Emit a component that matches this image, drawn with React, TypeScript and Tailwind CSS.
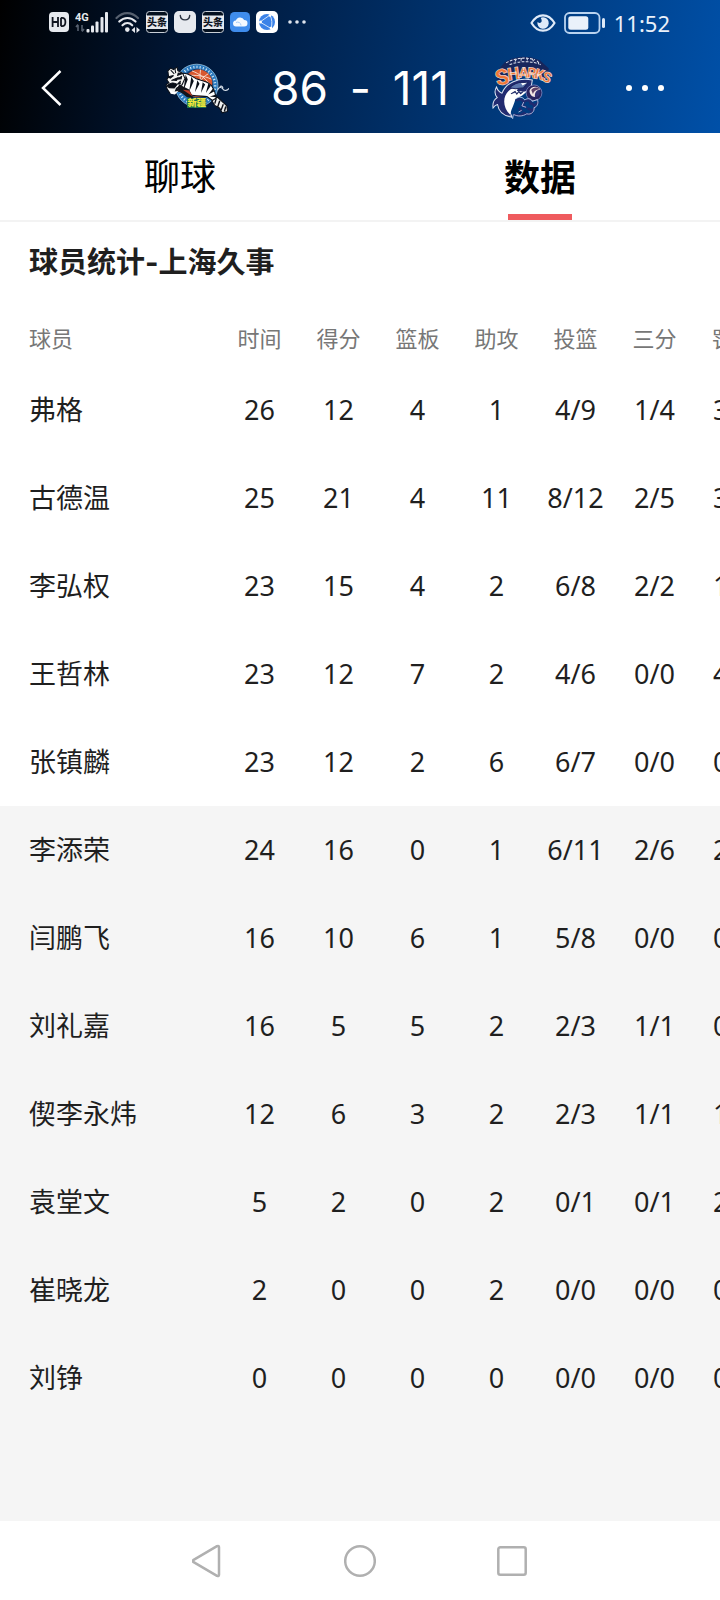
type Player = { name: string; stats: string[] };

const columns = ["时间", "得分", "篮板", "助攻", "投篮", "三分", "罚球"];

const starters: Player[] = [
  { name: "弗格", stats: ["26", "12", "4", "1", "4/9", "1/4", "3/3"] },
  { name: "古德温", stats: ["25", "21", "4", "11", "8/12", "2/5", "3/3"] },
  { name: "李弘权", stats: ["23", "15", "4", "2", "6/8", "2/2", "1/1"] },
  { name: "王哲林", stats: ["23", "12", "7", "2", "4/6", "0/0", "4/4"] },
  { name: "张镇麟", stats: ["23", "12", "2", "6", "6/7", "0/0", "0/0"] },
];

const bench: Player[] = [
  { name: "李添荣", stats: ["24", "16", "0", "1", "6/11", "2/6", "2/2"] },
  { name: "闫鹏飞", stats: ["16", "10", "6", "1", "5/8", "0/0", "0/0"] },
  { name: "刘礼嘉", stats: ["16", "5", "5", "2", "2/3", "1/1", "0/0"] },
  { name: "偰李永炜", stats: ["12", "6", "3", "2", "2/3", "1/1", "1/1"] },
  { name: "袁堂文", stats: ["5", "2", "0", "2", "0/1", "0/1", "2/2"] },
  { name: "崔晓龙", stats: ["2", "0", "0", "2", "0/0", "0/0", "0/0"] },
  { name: "刘铮", stats: ["0", "0", "0", "0", "0/0", "0/0", "0/0"] },
];

function HdIcon() {
  return (
    <svg width="20" height="20" viewBox="0 0 20 20" aria-hidden="true">
      <rect width="20" height="20" rx="4" fill="#e6e9ee" />
      <path d="M3.6 5v10M9 5v10M3.6 10H9M12 5.8v8.4M12 5.8h1.2c2.2 0 3.2 1.6 3.2 4.2s-1 4.2-3.2 4.2H12" fill="none" stroke="#10151f" strokeWidth="1.8" />
    </svg>
  );
}

function SignalIcon() {
  return (
    <svg width="34" height="22" viewBox="0 0 34 22" aria-hidden="true">
      <text x="0" y="10" fontSize="11" fontWeight="700" fill="#e6e9ee" className="font-['Roboto',sans-serif]">4G</text>
      <path d="M3 20v-6M1 16l2-2.5M7 14v6M9 18l-2 2.5" stroke="#56606f" strokeWidth="1.6" fill="none" />
      <g fill="#e6e9ee">
        <rect x="11.500" y="18" width="3" height="3.500" rx="1" />
        <rect x="16" y="14.500" width="3" height="7" rx="1" />
        <rect x="20.500" y="10.500" width="3" height="11" rx="1" />
        <rect x="25.500" y="6" width="3" height="15.500" rx="1" />
        <rect x="30" y="1" width="3" height="20.500" rx="1" />
      </g>
    </svg>
  );
}

function WifiIcon() {
  return (
    <svg width="25" height="22" viewBox="0 0 25 22" aria-hidden="true">
      <g fill="none" strokeWidth="2.2" strokeLinecap="round">
        <path d="M1.500 7C8 .5 16.500.5 23 7" stroke="#56606f" />
        <path d="M4.300 10.500c5-4.700 11.400-4.700 16.200 0" stroke="#e6e9ee" />
        <path d="M7.500 14.300c3-2.800 6.900-2.800 9.700 0" stroke="#e6e9ee" />
      </g>
      <circle cx="12.300" cy="18.600" r="2.300" fill="#e6e9ee" />
      <path d="M20 16v6l-3.500-3zM21.500 16v6l3.500-3z" fill="#e6e9ee" />
    </svg>
  );
}

function ToutiaoIcon() {
  return (
    <svg width="22" height="22" viewBox="0 0 22 22" aria-hidden="true">
      <rect x=".5" y=".5" width="21" height="21" rx="3" fill="#04101f" stroke="#c8ced6" />
      <rect x="0" y="4.500" width="22" height="13.500" fill="#e6e9ee" />
      <text x="11" y="15" fontSize="10" fontWeight="900" textAnchor="middle" fill="#10151f" className="font-['Noto_Sans_CJK_SC',sans-serif]">头条</text>
    </svg>
  );
}

function BagIcon() {
  return (
    <svg width="22" height="22" viewBox="0 0 22 22" aria-hidden="true">
      <rect width="22" height="22" rx="5" fill="#e6e9ee" />
      <path d="M6.300 4.500c.3 5.800 9.100 5.800 9.400 0" fill="none" stroke="#2b3340" strokeWidth="1.4" strokeLinecap="round" />
    </svg>
  );
}

function CloudIcon() {
  return (
    <svg width="20" height="20" viewBox="0 0 20 20" aria-hidden="true">
      <rect width="20" height="20" rx="4.500" fill="#3f8cec" />
      <path d="M6.300 14.600a3 3 0 0 1-.5-6 4.500 4.500 0 0 1 8.400-.6 3.300 3.300 0 0 1 0 6.600z" fill="#f4f9ff" />
      <path d="M6 10.500a3.400 3.400 0 0 1 5 3" stroke="#a9cdf8" fill="none" />
    </svg>
  );
}

function GlobeIcon() {
  return (
    <svg width="22" height="22" viewBox="0 0 22 22" aria-hidden="true">
      <rect width="22" height="22" rx="5" fill="#fff" />
      <circle cx="11" cy="11" r="8" fill="#3b82e8" />
      <path d="M4 11l10-7M4 11l11 6.500M14 4c2 4 2.500 9 1 13.500" fill="none" stroke="#cfe3fb" />
      <circle cx="4.500" cy="11" r="1.500" fill="#fff" />
      <circle cx="14" cy="4.500" r="1.300" fill="#fff" />
      <circle cx="15" cy="17" r="1.300" fill="#fff" />
    </svg>
  );
}

function EyeIcon() {
  return (
    <svg width="26" height="20" viewBox="0 0 26 20" aria-hidden="true">
      <path d="M1.500 10C4.500 5 8.500 2.300 13 2.300S21.500 5 24.500 10C21.500 15 17.500 17.700 13 17.700S4.500 15 1.500 10z" fill="none" stroke="#dfeaf8" strokeWidth="2.200" strokeLinejoin="round" />
      <path d="M13 4.300a5.700 5.700 0 1 1-5.500 4.400c.6 1.500 3.600 1.700 4.100-.2.400-1.500-.6-2.900-.9-3.700.7-.3 1.500-.5 2.300-.5z" fill="#dfeaf8" />
    </svg>
  );
}

function BatteryIcon() {
  return (
    <svg width="42" height="22" viewBox="0 0 42 22" aria-hidden="true">
      <rect x="1" y="1" width="34.500" height="20" rx="4.500" fill="none" stroke="#b9d3f0" strokeWidth="1.800" />
      <rect x="4.300" y="4.300" width="20" height="13.400" rx="2.500" fill="#eaf1fa" />
      <rect x="38" y="6" width="3" height="10" rx="1.500" fill="#dfeaf8" />
    </svg>
  );
}

function TigerLogo() {
  return (
    <svg width="64" height="54" viewBox="46 56 180 152" role="img" aria-label="新疆队">
      <circle cx="135" cy="125" r="60" fill="#2b79bd" stroke="#a8d4ee" strokeWidth="2" />
      <circle cx="135" cy="125" r="52" fill="none" stroke="#cfe6f5" strokeWidth="7" strokeDasharray="3 6" />
      <circle cx="137" cy="122" r="44" fill="#123d70" />
      <circle cx="140" cy="119" r="39" fill="#d9572f" />
      <path d="M122 84c22 8 42 24 54 44M108 97c22-2 48 0 68 10M146 80c-2 16-2 26 2 36M168 92c-12 6-20 14-24 26" fill="none" stroke="#fbe3d5" strokeWidth="2.500" />
      <path d="M86 92c18-6 32 4 48 14 18 8 38 6 48 28 8 14 4 22 10 28l-8 8-20-14c-22-2-44-2-60-8l-26-10z" fill="#fff" stroke="#0a0f18" strokeWidth="3" />
      <path d="M104 94l-6 44 12-30zM120 100l-6 42 13-30zM137 110l-7 34 13-24zM152 116l-5 30 12-24zM168 119l-7 27 14-20zM182 132l-14 18 16-8zM190 150l-18 6 18 2z" fill="#0a0f18" />
      <path d="M54 84l8-8 8 4 10-7 2 10 14 8 6 14-8 18-16 10-4 12-14 2-8-12-3-12 8-6-6-8 5-8z" fill="#f5f5f2" stroke="#0a0f18" strokeWidth="3" />
      <path d="M62 82l10 10M74 78l2 12M52 101l18-4-10 8M64 111l18-8-4 9M82 90l12 2-14 5M94 99l-14 8 13-1M52 126c8-10 20-10 28-4l-8 10-14-1zM90 112l-8 8 8 1" fill="#0a0f18" stroke="#0a0f18" strokeWidth="3" />
      <path d="M86 122l28 14 12 24-18-2-20-16-14 3z" fill="#12151c" />
      <path d="M96 137l18 2 10 17z" fill="#bd3b25" />
      <path d="M58 135l10 8 16-3-10 10-12-2z" fill="#fff" />
      <path d="M194 138c2-8 10-10 14-4 4 7 14 6 18-1M200 128c6-4 10 2 8 6" fill="none" stroke="#d8e1ea" strokeWidth="3" />
      <path d="M178 168l16-10 26 24 2 16-15 4-7-13-14-8z" fill="#eef0f0" stroke="#0a0f18" strokeWidth="3" />
      <path d="M190 162l-4 14M200 168l-6 18M210 178l-6 16M217 184l-4 14" stroke="#0a0f18" strokeWidth="4" />
      <rect x="108" y="161" width="54" height="27" fill="#23784e" />
      <text x="135" y="184" fontSize="26" fontWeight="900" textAnchor="middle" fill="#f1e93b" className="font-['Noto_Sans_CJK_SC',sans-serif]">新疆</text>
    </svg>
  );
}

function SharkLogo() {
  return (
    <svg width="64" height="64" viewBox="52 40 182 186" role="img" aria-label="上海队">
      <path d="M90 58q48-28 102-6l26 24-6 30-54-14-66 12-22 24-6-40z" fill="#17265c" />
      <path d="M94 60q40-22 84-9M104 65q42-16 86-2M124 49l-6 10M138 46l-1 12M154 45l3 12M170 48l6 12M184 54l10 12" fill="none" stroke="#dfe6f2" strokeWidth="3" strokeDasharray="8 4" />
      <g fontWeight="900" fill="#ef7537" stroke="#f5ede8" strokeWidth="1.500" className="font-['Roboto',sans-serif]">
        <text fontSize="64" transform="translate(68 128) rotate(-14)">S</text>
        <text fontSize="50" transform="translate(100 111) rotate(-8)">H</text>
        <text fontSize="44" transform="translate(129 103) rotate(2)">A</text>
        <text fontSize="42" transform="translate(153 102) rotate(8)">R</text>
        <text fontSize="42" transform="translate(174 105) rotate(14)">K</text>
        <text fontSize="42" transform="translate(195 111) rotate(20)">S</text>
      </g>
      <path d="M170 110c-42-8-76 8-88 38-8-3-14-12-16-18-6 10-5 22 2 31-10 6-14 16-12 30 4-6 8-9 13-10 4 26 22 34 42 36-7-12-8-26-2-36l14-22c18-8 36-16 44-30z" fill="#222b70" stroke="#dce3f2" strokeWidth="3" />
      <path d="M101 142c-17 16-18 46 4 68 6-20 14-34 16-46 14-4 26-12 30-20l-26-2 6-14c-11 2-23 6-30 14z" fill="#fff" />
      <path d="M104 132c14-13 34-18 53-14l-12 14-24 3zM108 150l12-7 5 8 6-8 5 7 8-7" fill="#5c76ad" stroke="#1d2560" strokeWidth="3" />
      <path d="M137 119l18-1-13 8z" fill="#fff" />
      <circle cx="175" cy="147" r="23" fill="#28235e" stroke="#8f9bd0" strokeWidth="2" />
      <circle cx="178" cy="146" r="14" fill="#343074" />
      <path d="M162 141c3-13 23-16 32-3-12-1-18 9-16 21-9 0-16-7-16-18z" fill="#f2e6e4" />
      <path d="M167 139c5-8 18-10 25-2-12 0-18 5-20 14z" fill="#5f4167" />
      <path d="M123 170c8-8 18-4 22 4 8-9 20-6 20 4 12-1 14 15 5 20 0 11-15 16-24 8-8 8-22 9-30 3M145 175l-4 10 13 5M140 201l-9-10M169 197l-13-5M188 173l-11 12" fill="none" stroke="#202b70" strokeWidth="7" />
      <path d="M123 164c8-7 21-5 25 4 8-7 20-4 22 4l15-6c4 12-2 23-10 24 2 11-8 22-21 18-12 8-27 8-38 2M145 174l-5 11 12 4M139 198l-9 5M105 212l8 10 2-12" fill="none" stroke="#bdcbe9" strokeWidth="2.500" />
    </svg>
  );
}

function PlayerRows({ players }: { players: Player[] }) {
  return (
    <>
      {players.map((player) => (
        <tr key={player.name} className="h-[88px]">
          <th scope="row" className="pl-[29px] text-left font-normal">{player.name}</th>
          {player.stats.map((value, i) => (
            <td key={columns[i]} className="text-center">{value}</td>
          ))}
        </tr>
      ))}
    </>
  );
}

export default function App() {
  return (
    <div className="flex min-h-screen flex-col overflow-hidden bg-white font-['Noto_Sans','Noto_Sans_CJK_SC',sans-serif] text-[#1f1f1f]">
      <header className="bg-[linear-gradient(100deg,#000_0%,#00183a_28%,#003069_58%,#0050a8_100%)] text-white">
        <div className="flex h-11 items-center justify-between pr-[50px] pl-[49px]">
          <div className="flex items-center gap-[6px]">
            <HdIcon />
            <SignalIcon />
            <WifiIcon />
            <ToutiaoIcon />
            <BagIcon />
            <ToutiaoIcon />
            <CloudIcon />
            <GlobeIcon />
            <svg width="26" height="6" viewBox="0 0 26 6" fill="#dfe5ee" aria-hidden="true">
              <circle cx="6" cy="3" r="1.800" />
              <circle cx="13" cy="3" r="1.800" />
              <circle cx="20" cy="3" r="1.800" />
            </svg>
          </div>
          <div className="flex items-center gap-2 pt-px text-[22px] leading-6 text-[#eaf1fa]">
            <EyeIcon />
            <BatteryIcon />
            <time>11:52</time>
          </div>
        </div>
        <div className="grid h-[89px] grid-cols-[1fr_auto_1fr] items-center px-10 pb-[2px]">
          <button type="button" aria-label="返回" className="justify-self-start">
            <svg width="24" height="40" viewBox="0 0 24 40" fill="none" stroke="#fff" strokeWidth="2.500" aria-hidden="true">
              <path d="M20.500 3L3 20l17.500 17" />
            </svg>
          </button>
          <div className="flex items-center gap-[42px]">
            <TigerLogo />
            <div className="flex w-[178px] items-center justify-between font-['Inter',sans-serif] text-[46px] leading-none font-normal">
              <span>86</span>
              <span>-</span>
              <span>111</span>
            </div>
            <SharkLogo />
          </div>
          <button type="button" aria-label="更多" className="justify-self-end pr-4">
            <svg width="40" height="8" viewBox="0 0 40 8" fill="#fff" aria-hidden="true">
              <circle cx="5" cy="4" r="3" />
              <circle cx="21" cy="4" r="3" />
              <circle cx="37" cy="4" r="3" />
            </svg>
          </button>
        </div>
      </header>

      <nav className="grid h-[89px] grid-cols-2 border-b-2 border-[#f3f3f3] text-[36px] text-black">
        <button type="button" className="flex items-center justify-center pt-px">聊球</button>
        <button type="button" aria-current="page" className="flex flex-col items-center font-bold">
          <span className="flex flex-1 items-center pt-2">数据</span>
          <span className="h-[6px] w-16 bg-[#ef5b5e]" />
        </button>
      </nav>

      <main className="flex flex-1 flex-col">
        <h1 className="mb-2 flex h-20 items-center pt-[2px] pl-[29px] font-['Inter','Noto_Sans_CJK_SC',sans-serif] text-[29px] font-bold">球员统计-上海久事</h1>
        <div className="overflow-x-auto [scrollbar-width:none]">
          <table className="w-full min-w-[773px] table-fixed border-collapse">
            <thead className="text-[22px] text-[#777]">
              <tr className="h-14">
                <th scope="col" className="w-[220px] pl-[29px] text-left font-normal">球员</th>
                {columns.map((label) => (
                  <th key={label} scope="col" className="font-normal">{label}</th>
                ))}
              </tr>
            </thead>
            <tbody className="text-[27px]">
              <PlayerRows players={starters} />
            </tbody>
            <tbody className="bg-[#f5f5f5] text-[27px]">
              <PlayerRows players={bench} />
            </tbody>
          </table>
        </div>
        <div className="flex-1 bg-[#f5f5f5]" />
      </main>

      <footer className="flex h-[79px] items-center justify-center gap-[120px] bg-white">
        <button type="button" aria-label="后退">
          <svg width="32" height="34" viewBox="0 0 32 34" fill="none" stroke="#b0b0b0" strokeWidth="2.500" strokeLinejoin="round" aria-hidden="true">
            <path d="M1.200 16.200L25 2.200q2-.8 2 1v27.600q0 1.800-2 1L1.200 17.800q-1-.8 0-1.600z" />
          </svg>
        </button>
        <button type="button" aria-label="主页">
          <svg width="32" height="34" viewBox="0 0 32 34" fill="none" stroke="#b0b0b0" strokeWidth="2.500" aria-hidden="true">
            <circle cx="16" cy="17" r="14.800" />
          </svg>
        </button>
        <button type="button" aria-label="最近任务">
          <svg width="32" height="34" viewBox="0 0 32 34" fill="none" stroke="#b0b0b0" strokeWidth="2.500" aria-hidden="true">
            <rect x="2.300" y="3.300" width="27.400" height="27.400" rx="2" />
          </svg>
        </button>
      </footer>
    </div>
  );
}
